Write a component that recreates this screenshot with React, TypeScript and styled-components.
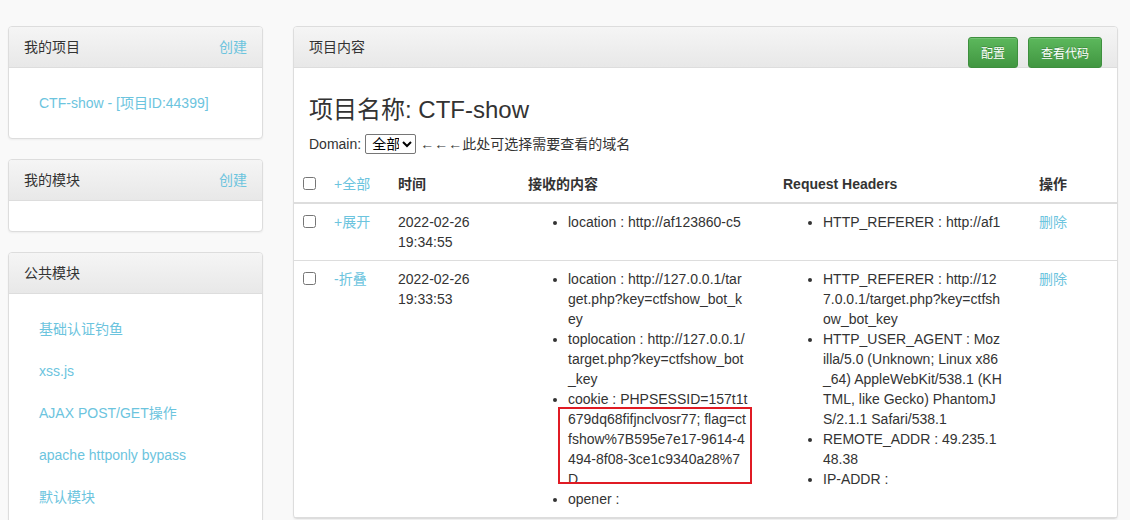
import React from "react";
import styled, { createGlobalStyle } from "styled-components";

const GlobalStyle = createGlobalStyle`
  html, body { margin: 0; padding: 0; }
  body {
    background: #f9f9f9;
    font-family: "Liberation Sans", Arial, "Noto Sans CJK SC", sans-serif;
    font-size: 14px;
    line-height: 20px;
    color: #333;
  }
  * { box-sizing: border-box; }
`;

const LINK = "#6cc4de";

const Page = styled.div`
  display: flex;
  align-items: flex-start;
  gap: 30px;
  padding: 26px 12px 0 8px;
`;

const Sidebar = styled.aside`
  width: 255px;
  flex: none;
  display: flex;
  flex-direction: column;
  gap: 20px;
`;

const Panel = styled.section`
  background: #fff;
  border: 1px solid #ddd;
  border-radius: 4px;
  box-shadow: 0 1px 2px rgba(0, 0, 0, 0.05);
`;

const Main = styled(Panel)`
  width: 825px;
  flex: none;
`;

const PanelHeading = styled.div`
  display: flex;
  justify-content: space-between;
  align-items: flex-start;
  height: 41px;
  padding: 10px 15px;
  background: linear-gradient(to bottom, #f5f5f5 0%, #e8e8e8 100%);
  border-bottom: 1px solid #ddd;
  border-radius: 3px 3px 0 0;
`;

const HeadingTitle = styled.span`
  color: #333;
`;

const HeadingLink = styled.a`
  color: ${LINK};
  text-decoration: none;
`;

const PanelBody = styled.div`
  padding: 15px;
`;

const NavList = styled.ul`
  list-style: none;
  margin: 0;
  padding: 0;
  & > li + li { margin-top: 2px; }
`;

const NavLink = styled.a`
  display: block;
  padding: 10px 15px;
  color: ${LINK};
  text-decoration: none;
`;

const ButtonGroup = styled.div`
  display: flex;
  gap: 10px;
  height: 20px;
`;

const Button = styled.button`
  height: 31px;
  padding: 0 12px;
  font-family: inherit;
  font-size: 12px;
  color: #fff;
  background: linear-gradient(to bottom, #5cb85c 0%, #419641 100%);
  border: 1px solid #3e8f3e;
  border-radius: 3px;
  text-shadow: 0 -1px 0 rgba(0, 0, 0, 0.2);
  box-shadow: inset 0 1px 0 rgba(255, 255, 255, 0.15);
`;

const Intro = styled.div`
  padding: 15px 15px 0;
`;

const Title = styled.h3`
  margin: 14px 0 10px;
  font-size: 24px;
  line-height: 26px;
  font-weight: 400;
  color: #333;
`;

const DomainLine = styled.p`
  margin: 0 0 11px;
  line-height: 22px;
  display: flex;
  align-items: center;
  gap: 4px;
`;

const Select = styled.select`
  width: 51px;
  height: 20px;
  padding: 0 0 0 2px;
  font-family: inherit;
  font-size: 14px;
  color: #000;
  background: #fff;
  border: 1px solid #767676;
  border-radius: 2px;
`;

const Table = styled.table`
  width: 100%;
  table-layout: fixed;
  border-collapse: collapse;
`;

const Col = styled.col<{ $w: number }>`
  width: ${(p) => p.$w}px;
`;

const Th = styled.th`
  padding: 8px;
  text-align: left;
  vertical-align: top;
  font-weight: bold;
  border-bottom: 2px solid #ddd;
`;

const Td = styled.td`
  position: relative;
  padding: 8px;
  vertical-align: top;
  border-bottom: 1px solid #ddd;
`;

const Check = styled.input`
  display: block;
  margin: 3px 0 0 1px;
  width: 13px;
  height: 13px;
`;

const TextLink = styled.a<{ $normal?: boolean }>`
  color: ${LINK};
  text-decoration: none;
  font-weight: ${(p) => (p.$normal ? 400 : "inherit")};
`;

const Bullets = styled.ul<{ $trail: number }>`
  margin: 0;
  padding: 0 ${(p) => p.$trail}px 0 40px;
  list-style: disc;
  word-break: break-all;
`;

const Highlight = styled.div`
  position: absolute;
  left: 38px;
  top: 146px;
  width: 194px;
  height: 77px;
  border: 2px solid #e01b24;
  pointer-events: none;
`;

type Row = {
  toggle: string;
  time: string;
  content: string[];
  headers: string[];
  highlight?: boolean;
};

const rows: Row[] = [
  {
    toggle: "+展开",
    time: "2022-02-26 19:34:55",
    content: ["location : http://af123860-c5"],
    headers: ["HTTP_REFERER : http://af1"],
  },
  {
    toggle: "-折叠",
    time: "2022-02-26 19:33:53",
    content: [
      "location : http://127.0.0.1/target.php?key=ctfshow_bot_key",
      "toplocation : http://127.0.0.1/target.php?key=ctfshow_bot_key",
      "cookie : PHPSESSID=157t1t679dq68fifjnclvosr77; flag=ctfshow%7B595e7e17-9614-4494-8f08-3ce1c9340a28%7D",
      "opener :",
    ],
    headers: [
      "HTTP_REFERER : http://127.0.0.1/target.php?key=ctfshow_bot_key",
      "HTTP_USER_AGENT : Mozilla/5.0 (Unknown; Linux x86_64) AppleWebKit/538.1 (KHTML, like Gecko) PhantomJS/2.1.1 Safari/538.1",
      "REMOTE_ADDR : 49.235.148.38",
      "IP-ADDR :",
    ],
    highlight: true,
  },
];

const publicModules = ["基础认证钓鱼", "xss.js", "AJAX POST/GET操作", "apache httponly bypass", "默认模块"];

export default function App() {
  return (
    <>
      <GlobalStyle />
      <Page>
        <Sidebar>
          <Panel>
            <PanelHeading>
              <HeadingTitle>我的项目</HeadingTitle>
              <HeadingLink href="#">创建</HeadingLink>
            </PanelHeading>
            <PanelBody>
              <NavList>
                <li>
                  <NavLink href="#">CTF-show - [项目ID:44399]</NavLink>
                </li>
              </NavList>
            </PanelBody>
          </Panel>
          <Panel>
            <PanelHeading>
              <HeadingTitle>我的模块</HeadingTitle>
              <HeadingLink href="#">创建</HeadingLink>
            </PanelHeading>
            <PanelBody />
          </Panel>
          <Panel>
            <PanelHeading>
              <HeadingTitle>公共模块</HeadingTitle>
            </PanelHeading>
            <PanelBody>
              <NavList>
                {publicModules.map((m) => (
                  <li key={m}>
                    <NavLink href="#">{m}</NavLink>
                  </li>
                ))}
              </NavList>
            </PanelBody>
          </Panel>
        </Sidebar>

        <Main>
          <PanelHeading>
            <HeadingTitle>项目内容</HeadingTitle>
            <ButtonGroup>
              <Button>配置</Button>
              <Button>查看代码</Button>
            </ButtonGroup>
          </PanelHeading>
          <Intro>
            <Title>项目名称: CTF-show</Title>
            <DomainLine>
              Domain:
              <Select defaultValue="all">
                <option value="all">全部</option>
              </Select>
              ←←←此处可选择需要查看的域名
            </DomainLine>
          </Intro>
          <Table>
            <colgroup>
              <Col $w={32} />
              <Col $w={64} />
              <Col $w={130} />
              <Col $w={255} />
              <Col $w={256} />
              <Col $w={86} />
            </colgroup>
            <thead>
              <tr>
                <Th>
                  <Check type="checkbox" />
                </Th>
                <Th>
                  <TextLink href="#" $normal>+全部</TextLink>
                </Th>
                <Th>时间</Th>
                <Th>接收的内容</Th>
                <Th>Request Headers</Th>
                <Th>操作</Th>
              </tr>
            </thead>
            <tbody>
              {rows.map((r, i) => (
                <tr key={i}>
                  <Td>
                    <Check type="checkbox" />
                  </Td>
                  <Td>
                    <TextLink href="#">{r.toggle}</TextLink>
                  </Td>
                  <Td>{r.time}</Td>
                  <Td>
                    <Bullets $trail={19}>
                      {r.content.map((c) => (
                        <li key={c}>{c}</li>
                      ))}
                    </Bullets>
                    {r.highlight && <Highlight />}
                  </Td>
                  <Td>
                    <Bullets $trail={20.5}>
                      {r.headers.map((h) => (
                        <li key={h}>{h}</li>
                      ))}
                    </Bullets>
                  </Td>
                  <Td>
                    <TextLink href="#">删除</TextLink>
                  </Td>
                </tr>
              ))}
            </tbody>
          </Table>
        </Main>
      </Page>
    </>
  );
}
